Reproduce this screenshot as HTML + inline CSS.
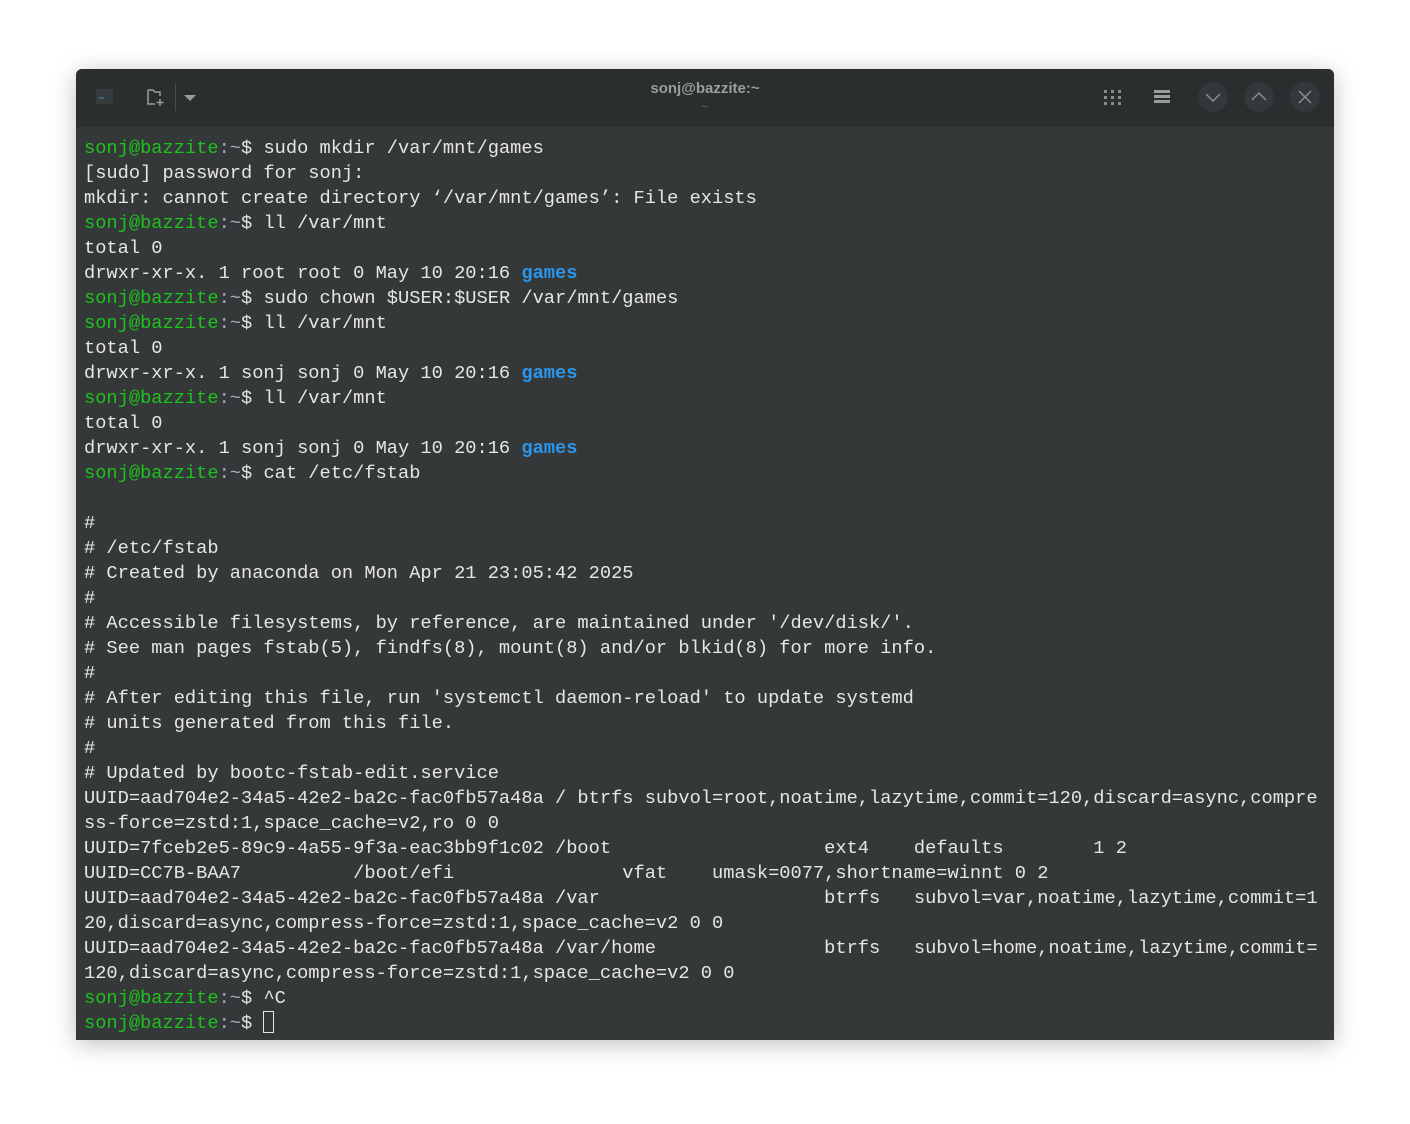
<!DOCTYPE html>
<html><head><meta charset="utf-8"><style>
body{margin:0;width:1410px;height:1124px;background:#fff;position:relative;overflow:hidden}
.win{position:absolute;left:76px;top:69px;width:1258px;height:971px;background:#353839;border-radius:6px 6px 0 0;box-shadow:0 4px 24px rgba(0,0,0,.25);overflow:hidden}
.tb{position:absolute;left:0;top:0;width:1258px;height:58px;background:#2a2e2f}
.title{position:absolute;left:0;width:1258px;top:11px;text-align:center;font:bold 15px "Liberation Sans",sans-serif;color:#9a9d9e}
.sub{position:absolute;left:0;width:1258px;top:32px;text-align:center;font:11px "Liberation Sans",sans-serif;color:#6a6d6e}
.cb{position:absolute;top:13px;width:30px;height:30px;border-radius:50%;background:#34383a}
pre{position:absolute;left:8px;top:67px;margin:0;font:18.7px/25px "Liberation Mono",monospace;color:#e6e6e6;white-space:pre}
.g{color:#1ec21e}.c{color:#9ab0bd}.b{color:#2b97ec;font-weight:bold}
.cur{display:inline-block;width:11px;height:22px;border:1.5px solid #e6e6e6;vertical-align:-5px;box-sizing:border-box}
</style></head><body>
<div class="win">
<div class="tb">
<div style="position:absolute;left:20px;top:20px;width:17px;height:15px;background:#363c3e;border-radius:1px"><div style="position:absolute;left:3px;top:8px;width:5px;height:2px;background:#3d6a80"></div></div>
<svg style="position:absolute;left:70px;top:19px" width="20" height="20" viewBox="0 0 20 20" fill="none" stroke="#9a9d9e" stroke-width="1.5"><path d="M2 2h5l2 2h5v4M2 2v14h7"/><path d="M14 11v7M10.5 14.5h7"/></svg>
<div style="position:absolute;left:99px;top:15px;width:1px;height:27px;background:#4a4e4f"></div>
<svg style="position:absolute;left:107px;top:25px" width="14" height="8"><path d="M1 1h12L7 7z" fill="#9a9d9e"/></svg>
<div class="title">sonj@bazzite:~</div><div class="sub">~</div>
<svg style="position:absolute;left:1028px;top:21px" width="18" height="16" fill="#8a8d8e"><rect x="0" y="0" width="3" height="3"/><rect x="7" y="0" width="3" height="3"/><rect x="14" y="0" width="3" height="3"/><rect x="0" y="6" width="3" height="3"/><rect x="7" y="6" width="3" height="3"/><rect x="14" y="6" width="3" height="3"/><rect x="0" y="12" width="3" height="3"/><rect x="7" y="12" width="3" height="3"/><rect x="14" y="12" width="3" height="3"/></svg>
<svg style="position:absolute;left:1078px;top:21px" width="16" height="14" fill="#9a9d9e"><rect y="0" width="16" height="3"/><rect y="5" width="16" height="3"/><rect y="10" width="16" height="3"/></svg>
<div class="cb" style="left:1122px"><svg width="30" height="30" fill="none" stroke="#8a8d8e" stroke-width="1.5"><path d="M8 12l7 7 7-7"/></svg></div>
<div class="cb" style="left:1168px"><svg width="30" height="30" fill="none" stroke="#8a8d8e" stroke-width="1.5"><path d="M8 18l7-7 7 7"/></svg></div>
<div class="cb" style="left:1214px"><svg width="30" height="30" fill="none" stroke="#8a8d8e" stroke-width="1.5"><path d="M9 9l12 12M21 9L9 21"/></svg></div>
</div>
<pre><span class="g">sonj@bazzite</span><span class="c">:~</span>$ sudo mkdir /var/mnt/games
[sudo] password for sonj:
mkdir: cannot create directory ‘/var/mnt/games’: File exists
<span class="g">sonj@bazzite</span><span class="c">:~</span>$ ll /var/mnt
total 0
drwxr-xr-x. 1 root root 0 May 10 20:16 <span class="b">games</span>
<span class="g">sonj@bazzite</span><span class="c">:~</span>$ sudo chown $USER:$USER /var/mnt/games
<span class="g">sonj@bazzite</span><span class="c">:~</span>$ ll /var/mnt
total 0
drwxr-xr-x. 1 sonj sonj 0 May 10 20:16 <span class="b">games</span>
<span class="g">sonj@bazzite</span><span class="c">:~</span>$ ll /var/mnt
total 0
drwxr-xr-x. 1 sonj sonj 0 May 10 20:16 <span class="b">games</span>
<span class="g">sonj@bazzite</span><span class="c">:~</span>$ cat /etc/fstab

#
# /etc/fstab
# Created by anaconda on Mon Apr 21 23:05:42 2025
#
# Accessible filesystems, by reference, are maintained under '/dev/disk/'.
# See man pages fstab(5), findfs(8), mount(8) and/or blkid(8) for more info.
#
# After editing this file, run 'systemctl daemon-reload' to update systemd
# units generated from this file.
#
# Updated by bootc-fstab-edit.service
UUID=aad704e2-34a5-42e2-ba2c-fac0fb57a48a / btrfs subvol=root,noatime,lazytime,commit=120,discard=async,compre
ss-force=zstd:1,space_cache=v2,ro 0 0
UUID=7fceb2e5-89c9-4a55-9f3a-eac3bb9f1c02 /boot                   ext4    defaults        1 2
UUID=CC7B-BAA7          /boot/efi               vfat    umask=0077,shortname=winnt 0 2
UUID=aad704e2-34a5-42e2-ba2c-fac0fb57a48a /var                    btrfs   subvol=var,noatime,lazytime,commit=1
20,discard=async,compress-force=zstd:1,space_cache=v2 0 0
UUID=aad704e2-34a5-42e2-ba2c-fac0fb57a48a /var/home               btrfs   subvol=home,noatime,lazytime,commit=
120,discard=async,compress-force=zstd:1,space_cache=v2 0 0
<span class="g">sonj@bazzite</span><span class="c">:~</span>$ ^C
<span class="g">sonj@bazzite</span><span class="c">:~</span>$ <span class="cur"></span></pre>
</div>
</body></html>
